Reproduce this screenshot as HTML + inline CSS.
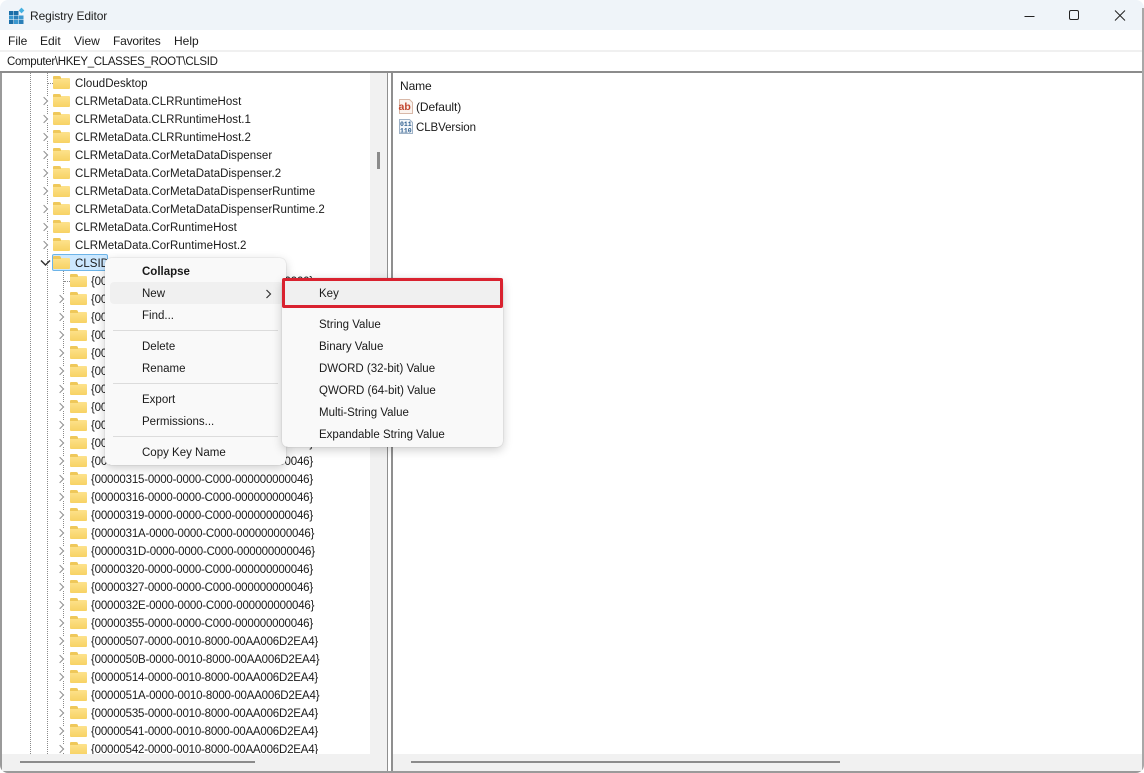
<!DOCTYPE html>
<html><head><meta charset="utf-8"><style>
html,body{margin:0;padding:0;background:#fff}
body{width:1144px;height:773px;overflow:hidden;position:relative;font-family:"Liberation Sans",sans-serif;font-size:11.5px;color:#1a1a1a}
.a{position:absolute}
#win{left:0;top:0;width:1144px;height:773px;background:#fff;border-radius:8px;overflow:hidden}
.t{position:absolute;white-space:nowrap;line-height:16px}
.r{position:absolute;height:18px;left:0;width:370px}
.r .t{top:2px}
.l1 .t{left:75px;letter-spacing:.03px}.l2 .t{left:91px;letter-spacing:-.2px}
.m .t{margin-top:1px}
.f{position:absolute;top:4px;width:17px;height:11px;background:linear-gradient(#fde28c,#f7d264);border-radius:1px}
.f:before{content:"";position:absolute;left:0;top:-2px;width:8px;height:3px;background:#efc85a;border-radius:1px 2px 0 0}
.l1 .f{left:53px}.l2 .f{left:70px}
.c{position:absolute;top:5px;width:9px;height:8px;background:#fff}
.c:after{content:"";position:absolute;left:0;top:1px;width:5px;height:5px;border-top:1.5px solid #8f8f8f;border-right:1.5px solid #8f8f8f;transform:rotate(45deg)}
.l1 .c{left:41px}.l2 .c{left:57px}
.m{position:absolute;background:#f9f9f9;border-radius:6px;box-shadow:0 3px 10px rgba(0,0,0,.2),0 0 1px rgba(0,0,0,.25)}
.sep{position:absolute;height:1px;background:#dcdcdc}
</style></head><body>
<div id="win" class="a">
<div class="a" style="left:0;top:0;width:1144px;height:30px;background:#eff4f9"></div>
<svg class="a" style="left:8px;top:7px" width="17" height="18" viewBox="0 0 17 18"><g fill="#2b7fb8"><rect x="1" y="4" width="4.500" height="4" fill="#1a6ea8"/><rect x="6" y="4" width="4.500" height="4" fill="#1a6ea8"/><rect x="1" y="8.500" width="4.500" height="4" fill="#3a97cf"/><rect x="6" y="8.500" width="4.500" height="4"/><rect x="11" y="8.500" width="4.500" height="4" fill="#3a97cf"/><rect x="1" y="13" width="4.500" height="4" fill="#1a6ea8"/><rect x="6" y="13" width="4.500" height="4" fill="#3a97cf"/><rect x="11" y="13" width="4.500" height="4"/></g><rect x="11.500" y="1.500" width="4" height="4" fill="#45b0e0" transform="rotate(45 13.500 3.500)"/></svg>
<div class="t" style="left:30px;top:8px;color:#222;font-size:12px;letter-spacing:-.1px">Registry Editor</div>
<svg class="a" style="left:1020px;top:8px" width="110" height="16" fill="none" stroke="#222" stroke-width="1"><path d="M4.500 8.500h10"/><rect x="49.500" y="2.500" width="9" height="9" rx="1.500"/><path d="M95 2.500l10 10M105 2.500l-10 10"/></svg>
<div class="t" style="left:8px;top:33px;font-size:12px">File</div>
<div class="t" style="left:40px;top:33px;font-size:12px">Edit</div>
<div class="t" style="left:74px;top:33px;font-size:12px">View</div>
<div class="t" style="left:113px;top:33px;font-size:12px;letter-spacing:-.2px">Favorites</div>
<div class="t" style="left:174px;top:33px;font-size:12px">Help</div>
<div class="a" style="left:0;top:50px;width:1144px;height:2px;background:#f0f0f0"></div>
<div class="t" style="left:7px;top:54px;letter-spacing:-.33px">Computer\HKEY_CLASSES_ROOT\CLSID</div>
<div class="a" style="left:0;top:71px;width:1144px;height:2px;background:#8c8c8c"></div>
<div class="a" style="left:0;top:73px;width:2px;height:700px;background:#9a9a9a"></div>
<div class="a" style="left:1142px;top:8px;width:2px;height:762px;background:#a8a8a8"></div>
<div class="a" style="left:0;top:771px;width:1144px;height:2px;background:#9a9a9a"></div>
<div class="a" style="left:370px;top:73px;width:17px;height:698px;background:#f1f1f1"></div>
<div class="a" style="left:377px;top:152px;width:3px;height:17px;background:#8b8b8b"></div>
<div class="a" style="left:2px;top:754px;width:385px;height:17px;background:#f1f1f1"></div>
<div class="a" style="left:20px;top:761px;width:235px;height:2px;background:#8b8b8b"></div>
<div class="a" style="left:387px;top:73px;width:1px;height:698px;background:#8f8f8f"></div>
<div class="a" style="left:388px;top:73px;width:3px;height:698px;background:#fff"></div>
<div class="a" style="left:391px;top:73px;width:2px;height:698px;background:#8f8f8f"></div>
<div class="a" style="left:393px;top:754px;width:749px;height:17px;background:#f1f1f1"></div>
<div class="a" style="left:411px;top:761px;width:429px;height:2px;background:#8b8b8b"></div>

<div class="a" style="left:30px;top:73px;width:0;height:681px;border-left:1px dotted #8a8a8a"></div>
<div class="a" style="left:47px;top:73px;width:0;height:681px;border-left:1px dotted #8a8a8a"></div>
<div class="a" style="left:48px;top:83px;width:5px;border-top:1px dotted #8a8a8a"></div>
<div class="a" style="left:63px;top:271px;width:0;height:483px;border-left:1px dotted #8a8a8a"></div>
<div class="a" style="left:64px;top:281px;width:6px;border-top:1px dotted #8a8a8a"></div>

<div class="r l1" style="top:74px"><i class="f"></i><div class="t">CloudDesktop</div></div>
<div class="r l1" style="top:92px"><i class="c"></i><i class="f"></i><div class="t">CLRMetaData.CLRRuntimeHost</div></div>
<div class="r l1" style="top:110px"><i class="c"></i><i class="f"></i><div class="t">CLRMetaData.CLRRuntimeHost.1</div></div>
<div class="r l1" style="top:128px"><i class="c"></i><i class="f"></i><div class="t">CLRMetaData.CLRRuntimeHost.2</div></div>
<div class="r l1" style="top:146px"><i class="c"></i><i class="f"></i><div class="t">CLRMetaData.CorMetaDataDispenser</div></div>
<div class="r l1" style="top:164px"><i class="c"></i><i class="f"></i><div class="t">CLRMetaData.CorMetaDataDispenser.2</div></div>
<div class="r l1" style="top:182px"><i class="c"></i><i class="f"></i><div class="t">CLRMetaData.CorMetaDataDispenserRuntime</div></div>
<div class="r l1" style="top:200px"><i class="c"></i><i class="f"></i><div class="t">CLRMetaData.CorMetaDataDispenserRuntime.2</div></div>
<div class="r l1" style="top:218px"><i class="c"></i><i class="f"></i><div class="t">CLRMetaData.CorRuntimeHost</div></div>
<div class="r l1" style="top:236px"><i class="c"></i><i class="f"></i><div class="t">CLRMetaData.CorRuntimeHost.2</div></div>
<div class="r l1" style="top:254px"><div class="a" style="left:52px;top:0;width:56px;height:17px;background:#cce8ff;border:1px solid #6db4e8;box-sizing:border-box;border-radius:2px"></div><svg class="a" style="left:40px;top:5px" width="11" height="8" fill="none" stroke="#333" stroke-width="1.500"><path d="M1 1.500l4.500 4.500 4.500-4.500"/></svg><i class="f"></i><div class="t">CLSID</div></div>
<div class="r l2" style="top:272px"><i class="f"></i><div class="t">{00000300-0000-0000-C000-000000000000}</div></div>
<div class="r l2" style="top:290px"><i class="c"></i><i class="f"></i><div class="t">{00000303-0000-0000-C000-000000000046}</div></div>
<div class="r l2" style="top:308px"><i class="c"></i><i class="f"></i><div class="t">{00000304-0000-0000-C000-000000000046}</div></div>
<div class="r l2" style="top:326px"><i class="c"></i><i class="f"></i><div class="t">{00000305-0000-0000-C000-000000000046}</div></div>
<div class="r l2" style="top:344px"><i class="c"></i><i class="f"></i><div class="t">{00000306-0000-0000-C000-000000000046}</div></div>
<div class="r l2" style="top:362px"><i class="c"></i><i class="f"></i><div class="t">{00000308-0000-0000-C000-000000000046}</div></div>
<div class="r l2" style="top:380px"><i class="c"></i><i class="f"></i><div class="t">{00000309-0000-0000-C000-000000000046}</div></div>
<div class="r l2" style="top:398px"><i class="c"></i><i class="f"></i><div class="t">{0000030B-0000-0000-C000-000000000046}</div></div>
<div class="r l2" style="top:416px"><i class="c"></i><i class="f"></i><div class="t">{00000311-0000-0000-C000-000000000046}</div></div>
<div class="r l2" style="top:434px"><i class="c"></i><i class="f"></i><div class="t">{00000312-0000-0000-C000-000000000046}</div></div>
<div class="r l2" style="top:452px"><i class="c"></i><i class="f"></i><div class="t">{00000313-0000-0000-C000-000000000046}</div></div>
<div class="r l2" style="top:470px"><i class="c"></i><i class="f"></i><div class="t">{00000315-0000-0000-C000-000000000046}</div></div>
<div class="r l2" style="top:488px"><i class="c"></i><i class="f"></i><div class="t">{00000316-0000-0000-C000-000000000046}</div></div>
<div class="r l2" style="top:506px"><i class="c"></i><i class="f"></i><div class="t">{00000319-0000-0000-C000-000000000046}</div></div>
<div class="r l2" style="top:524px"><i class="c"></i><i class="f"></i><div class="t">{0000031A-0000-0000-C000-000000000046}</div></div>
<div class="r l2" style="top:542px"><i class="c"></i><i class="f"></i><div class="t">{0000031D-0000-0000-C000-000000000046}</div></div>
<div class="r l2" style="top:560px"><i class="c"></i><i class="f"></i><div class="t">{00000320-0000-0000-C000-000000000046}</div></div>
<div class="r l2" style="top:578px"><i class="c"></i><i class="f"></i><div class="t">{00000327-0000-0000-C000-000000000046}</div></div>
<div class="r l2" style="top:596px"><i class="c"></i><i class="f"></i><div class="t">{0000032E-0000-0000-C000-000000000046}</div></div>
<div class="r l2" style="top:614px"><i class="c"></i><i class="f"></i><div class="t">{00000355-0000-0000-C000-000000000046}</div></div>
<div class="r l2" style="top:632px"><i class="c"></i><i class="f"></i><div class="t">{00000507-0000-0010-8000-00AA006D2EA4}</div></div>
<div class="r l2" style="top:650px"><i class="c"></i><i class="f"></i><div class="t">{0000050B-0000-0010-8000-00AA006D2EA4}</div></div>
<div class="r l2" style="top:668px"><i class="c"></i><i class="f"></i><div class="t">{00000514-0000-0010-8000-00AA006D2EA4}</div></div>
<div class="r l2" style="top:686px"><i class="c"></i><i class="f"></i><div class="t">{0000051A-0000-0010-8000-00AA006D2EA4}</div></div>
<div class="r l2" style="top:704px"><i class="c"></i><i class="f"></i><div class="t">{00000535-0000-0010-8000-00AA006D2EA4}</div></div>
<div class="r l2" style="top:722px"><i class="c"></i><i class="f"></i><div class="t">{00000541-0000-0010-8000-00AA006D2EA4}</div></div>
<div class="r l2" style="top:740px;height:14px;overflow:hidden"><i class="c"></i><i class="f"></i><div class="t">{00000542-0000-0010-8000-00AA006D2EA4}</div></div>

<div class="t" style="left:400px;top:78px;font-size:12px;letter-spacing:-.1px">Name</div>
<svg class="a" style="left:398px;top:98px" width="16" height="17" viewBox="0 0 16 17"><path d="M1.500 1.500h10l3 3v11h-13z" fill="#fbf3ee" stroke="#d8b8a8"/><text x="0.500" y="12" font-family="Liberation Sans" font-size="10.500" font-weight="bold" fill="#c2452d">ab</text></svg>
<div class="t" style="left:416px;top:99px;font-size:12px;letter-spacing:-.1px">(Default)</div>
<svg class="a" style="left:398px;top:118px" width="16" height="17" viewBox="0 0 16 17"><path d="M1.500 1.500h10l3 3v11h-13z" fill="#f4f7fa" stroke="#9fb2c6"/><text x="2" y="8" font-family="Liberation Mono" font-size="6.500" font-weight="bold" fill="#2a5b8c">011</text><text x="2" y="14.500" font-family="Liberation Mono" font-size="6.500" font-weight="bold" fill="#2a5b8c">110</text></svg>
<div class="t" style="left:416px;top:120px;letter-spacing:-.08px">CLBVersion</div>

<div class="m" style="left:105px;top:258px;width:181px;height:207px">
<div class="a" style="left:5px;top:24px;width:173px;height:22px;background:#f0f0f0;border-radius:4px"></div>
<div class="t" style="left:37px;top:5px;font-weight:bold">Collapse</div>
<div class="t" style="left:37px;top:27px">New</div>
<svg class="a" style="left:160px;top:31px" width="8" height="10" fill="none" stroke="#333" stroke-width="1.200"><path d="M1.500 1l4 4-4 4"/></svg>
<div class="t" style="left:37px;top:49px">Find...</div>
<div class="sep" style="left:8px;top:72px;width:165px"></div>
<div class="t" style="left:37px;top:80px">Delete</div>
<div class="t" style="left:37px;top:102px">Rename</div>
<div class="sep" style="left:8px;top:125px;width:165px"></div>
<div class="t" style="left:37px;top:133px">Export</div>
<div class="t" style="left:37px;top:155px">Permissions...</div>
<div class="sep" style="left:8px;top:178px;width:165px"></div>
<div class="t" style="left:37px;top:186px">Copy Key Name</div>
</div>

<div class="m" style="left:282px;top:278px;width:221px;height:169px">
<div class="a" style="left:0;top:0;width:221px;height:30px;box-sizing:border-box;border:3px solid #d9222f;background:#f0f0f0;border-radius:2px"></div>
<div class="t" style="left:37px;top:7px">Key</div>
<div class="t" style="left:37px;top:38px">String Value</div>
<div class="t" style="left:37px;top:60px">Binary Value</div>
<div class="t" style="left:37px;top:82px">DWORD (32-bit) Value</div>
<div class="t" style="left:37px;top:104px">QWORD (64-bit) Value</div>
<div class="t" style="left:37px;top:126px">Multi-String Value</div>
<div class="t" style="left:37px;top:148px">Expandable String Value</div>
</div>
</div>
</body></html>
